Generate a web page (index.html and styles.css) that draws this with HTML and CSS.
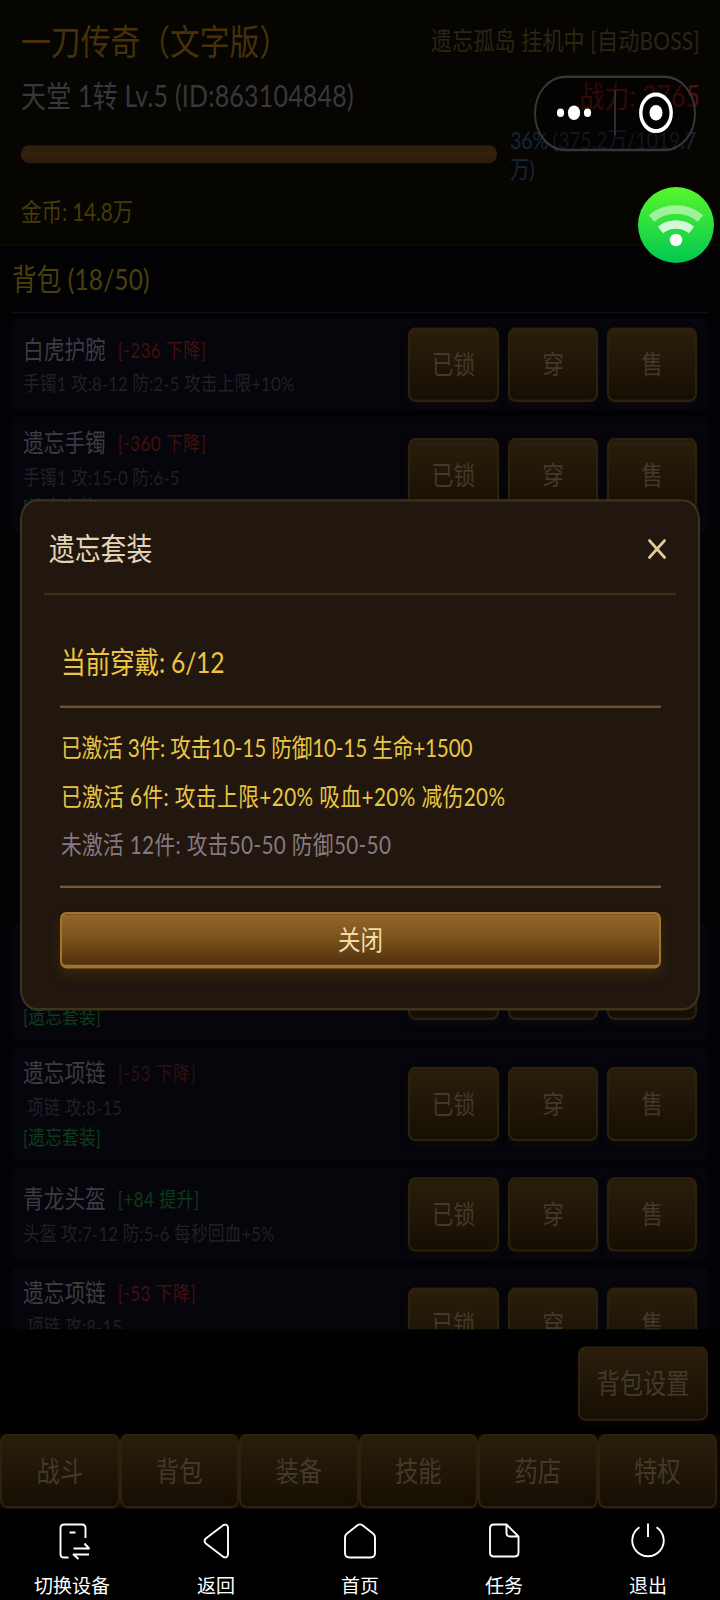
FILE: index.html
```html
<!DOCTYPE html>
<html lang="zh-CN">
<head>
<meta charset="utf-8">
<title>一刀传奇（文字版）</title>
<link rel="stylesheet" href="styles.css">
</head>
<body>
<div class="screen">
<div class="viewport">
<main class="stage">
  <header class="header">
    <div class="row row-title"><h1 class="title">一刀传奇（文字版）</h1><span class="status">遗忘孤岛 挂机中 [自动BOSS]</span></div>
    <div class="row row-level"><span class="level">天堂 1转 Lv.5 (ID:863104848)</span><span class="power">战力: 3765</span></div>
    <div class="row row-exp"><div class="exp-bar"></div><div class="exp-text">36% (375.2万/1019.7<br>万)</div></div>
    <div class="gold">金币: 14.8万</div>
  </header>
  <section class="bag">
    <h2 class="bag-title">背包 (18/50)</h2>
    <div class="list">
      <article class="card short">
        <div class="info"><div class="name">白虎护腕<span class="tag down">[-236 下降]</span></div><div class="attr">手镯1 攻:8-12 防:2-5 攻击上限+10%</div></div>
        <div class="actions"><button class="btn">已锁</button><button class="btn">穿</button><button class="btn">售</button></div>
      </article>
      <article class="card">
        <div class="info"><div class="name">遗忘手镯<span class="tag down">[-360 下降]</span></div><div class="attr">手镯1 攻:15-0 防:6-5</div><div class="set">[遗忘套装]</div></div>
        <div class="actions"><button class="btn">已锁</button><button class="btn">穿</button><button class="btn">售</button></div>
      </article>
      <div class="covered"></div>
      <article class="card">
        <div class="info"><div class="name">遗忘项链</div><div class="attr inset">项链 攻:8-15</div><div class="set">[遗忘套装]</div></div>
        <div class="actions"><button class="btn">已锁</button><button class="btn">穿</button><button class="btn">售</button></div>
      </article>
      <article class="card">
        <div class="info"><div class="name">遗忘项链<span class="tag down faint">[-53 下降]</span></div><div class="attr inset">项链 攻:8-15</div><div class="set">[遗忘套装]</div></div>
        <div class="actions"><button class="btn">已锁</button><button class="btn">穿</button><button class="btn">售</button></div>
      </article>
      <article class="card short">
        <div class="info"><div class="name">青龙头盔<span class="tag up">[+84 提升]</span></div><div class="attr">头盔 攻:7-12 防:5-6 每秒回血+5%</div></div>
        <div class="actions"><button class="btn">已锁</button><button class="btn">穿</button><button class="btn">售</button></div>
      </article>
      <article class="card">
        <div class="info"><div class="name">遗忘项链<span class="tag down">[-53 下降]</span></div><div class="attr inset">项链 攻:8-15</div><div class="set">[遗忘套装]</div></div>
        <div class="actions"><button class="btn">已锁</button><button class="btn">穿</button><button class="btn">售</button></div>
      </article>
    </div>
  </section>
  <div class="toolbar"><button class="btn settings">背包设置</button></div>
  <nav class="tabs"><button class="btn">战斗</button><button class="btn">背包</button><button class="btn">装备</button><button class="btn">技能</button><button class="btn">药店</button><button class="btn">特权</button></nav>

  <section class="modal">
    <div class="modal-head"><h3 class="modal-title">遗忘套装</h3>
      <svg class="close" viewBox="0 0 18 17"><path d="M1.5 1.5 16.5 15.5M16.5 1.5 1.5 15.5"/></svg></div>
    <div class="modal-body">
      <div class="worn">当前穿戴: 6/12</div>
      <div class="effects">
        <div class="effect e1">已激活 3件: 攻击10-15 防御10-15 生命+1500</div>
        <div class="effect e2">已激活 6件: 攻击上限+20% 吸血+20% 减伤20%</div>
        <div class="effect off">未激活 12件: 攻击50-50 防御50-50</div>
      </div>
      <button class="confirm">关闭</button>
    </div>
  </section>

  <div class="capsule">
    <svg viewBox="0 0 162 62.5">
      <circle cx="26.5" cy="31" r="3.6"/><circle cx="40" cy="31" r="6.1"/><circle cx="53.5" cy="31" r="3.6"/>
      <path d="M81 12V50" class="sep"/>
      <circle cx="122" cy="31" r="15.2" class="ring"/><circle cx="122" cy="31" r="6.5"/>
    </svg>
  </div>
</main>
</div>

<div class="wifi">
  <svg viewBox="0 0 76 76">
    <path d="M13.5 31.5A38 38 0 0 1 62.500 31.500" class="far"/>
    <path d="M22.5 43A25 25 0 0 1 53.500 43" class="near"/>
    <circle cx="38" cy="53" r="6.2"/>
  </svg>
</div>

<footer class="sysbar">
  <div class="sys"><svg viewBox="-5.500 0 36 36"><path d="M26 15V5q0-3.500-3.500-3.500H4.500Q1 1.500 1 5V31q0 3.500 3.500 3.500H9M10 9.500h6M14 25.500H29.500L25 20.500M29.500 31.500H14L19 36"/></svg><span>切换设备</span></div>
  <div class="sys"><svg viewBox="-5.500 0 36 36"><path d="M20 2 2.300 15.500Q-.2 18 2.300 20.500L20 34q4.300 1.500 4.500-3V5q-.2-4.500-4.500-3Z"/></svg><span>返回</span></div>
  <div class="sys"><svg viewBox="0 0 36 36"><path d="M15.500 2.200 5 10.500Q3 12 3 14.500V30q0 4.500 4.500 4.500H28.500Q33 34.500 33 30V14.500Q33 12 31 10.500L20.500 2.200Q18 .5 15.500 2.200Z"/></svg><span>首页</span></div>
  <div class="sys"><svg viewBox="0 0 36 36"><path d="M20.500 1.500H8Q4 1.500 4 5.500V29.500Q4 33.500 8 33.500H28.500Q32.500 33.500 32.500 29.500V13.500ZM20.500 1.500V10q0 3.500 3.500 3.500h8.500"/></svg><span>任务</span></div>
  <div class="sys"><svg viewBox="0 0 36 36"><path d="M9.500 4.300A15.700 15.700 0 1 0 26.500 4.300M18 .5V14"/></svg><span>退出</span></div>
</footer>
</div>
</body>
</html>
```
FILE: styles.css
```css
* { box-sizing: border-box; }
body { margin: 0; background: #000; }
h1, h2, h3 { margin: 0; font-weight: 400; }
button { font: inherit; padding: 0; margin: 0; }

.screen {
  position: relative;
  width: 720px;
  height: 1600px;
  overflow: hidden;
  background: #000;
  font-family: Lato, "Noto Sans CJK SC", sans-serif;
}
.viewport { height: 1509px; overflow: hidden; }

/* The game canvas fills the tall window by stretching vertically. */
.stage {
  position: relative;
  display: flex;
  flex-direction: column;
  width: 720px;
  height: 1257.5px;
  transform: scaleY(1.2);
  transform-origin: 0 0;
  background: #020204;
  white-space: nowrap;
}

.header {
  height: 205px;
  padding: 14.500px 20px 0 21px;
  background: #070502;
  border-bottom: 1px solid #140e07;
}
.row { display: flex; justify-content: space-between; }
.row-title { height: 39.500px; line-height: 40px; }
.title { font-size: 29.800px; color: #483109; }
.status { font-size: 21px; line-height: 38px; color: #2b2611; letter-spacing: .2px; }
.row-level { height: 50.500px; line-height: 50px; font-size: 25px; }
.level { color: #35383c; letter-spacing: .2px; }
.power { color: #521208; }
.row-exp { height: 56px; justify-content: flex-start; gap: 13px; }
.exp-bar {
  width: 476px;
  height: 15px;
  margin-top: 16.500px;
  border-radius: 8px;
  background: linear-gradient(#2c1d0d, #342108 55%, #2b1b10);
}
.exp-text { font-size: 19.700px; line-height: 24px; color: #17253a; letter-spacing: -.2px; }
.gold { font-size: 20.700px; line-height: 30px; color: #453b09; letter-spacing: -.15px; }

.bag { height: 903.300px; padding: 0 12px; overflow: hidden; }
.bag-title {
  height: 56px;
  margin-bottom: 4px;
  line-height: 55px;
  font-size: 24.500px;
  letter-spacing: .15px;
  color: #4b400d;
  border-bottom: 1px solid #121215;
}
.list { display: flex; flex-direction: column; gap: 4.600px; }
.card {
  display: flex;
  flex: none;
  align-items: center;
  justify-content: space-between;
  height: 96.700px;
  padding: 0 11px;
  border-radius: 6px;
  background: #05050b;
}
.card.short { height: 77.500px; }
.short .info { padding-top: 3px; }
.covered { flex: none; height: 317.500px; }
.name { height: 29px; line-height: 28px; font-size: 20.700px; color: #3c3c42; }
.tag { margin-left: 12px; font-size: 17px; letter-spacing: .45px; position: relative; top: -1px; }
.down { color: #40110f; }
.faint { color: #2e1013; }
.up { color: #0d3b18; }
.attr { height: 28.500px; line-height: 28.500px; font-size: 16.700px; color: #202026; letter-spacing: .15px; }
.inset { padding-left: 4px; }
.set { height: 23.500px; line-height: 22.500px; font-size: 16.700px; letter-spacing: .2px; color: #0f3c1c; }
.actions { display: grid; grid-template-columns: 91px 90px 90px; gap: 9px; }
.btn {
  height: 61.500px;
  padding-bottom: 2.500px;
  border: 2px solid #2b210e;
  border-radius: 7px;
  background: linear-gradient(#2a1e0b, #1e1507 60%, #170e03);
  box-shadow: 0 3px 8px rgba(60, 42, 8, .15);
  color: #43392a;
  font-size: 21.700px;
}

.toolbar {
  display: flex;
  justify-content: flex-end;
  height: 86.700px;
  padding: 14.200px 12px 0;
  background: #010102;
}
.settings { width: 130px; font-size: 23.200px; }
.tabs { display: grid; grid-template-columns: repeat(6, 1fr); padding-right: 3px; background: #0c0703; }
.tabs .btn { height: 62.500px; font-size: 23.300px; }

.modal {
  position: absolute;
  left: 20px;
  top: 416.300px;
  width: 680px;
  height: 425.800px;
  padding: 0 22px;
  border: 2px solid #3d321a;
  border-radius: 17px;
  background: #21170e;
}
.modal-head {
  display: flex;
  align-items: center;
  justify-content: space-between;
  height: 78px;
  padding: 0 10px 0 5px;
  border-bottom: 2px solid #3d2f1a;
}
.modal-title { padding-bottom: 2px; font-size: 25.800px; color: #e5d4b6; }
.close { width: 18px; height: 17px; margin-top: 2px; fill: none; stroke: #e0cc98; stroke-width: 2.600; stroke-linecap: round; }
.modal-body { padding: 30px 15px 0 16px; }
.worn { height: 64px; line-height: 51px; padding-left: 1px; font-size: 24.700px; letter-spacing: -.2px; color: #edc443; border-bottom: 2px solid #70522c; }
.effects { height: 149.500px; padding: 13px 0 0 1px; border-bottom: 2px solid #7a5a2c; }
.effect { height: 40.300px; line-height: 40.300px; font-size: 20.700px; color: #e9c643; }
.effect.e1 { letter-spacing: -.17px; }
.effect.e2 { letter-spacing: .42px; }
.effect.off { color: #867a82; letter-spacing: .35px; }
.confirm {
  width: 100%;
  height: 47.500px;
  margin-top: 20px;
  padding-bottom: 2.500px;
  border: 2px solid #a2742d;
  border-bottom-width: 3px;
  border-radius: 6px;
  background: linear-gradient(#93662a, #7b541c 45%, #512f0e);
  box-shadow: 0 5px 10px rgba(112, 78, 10, .28);
  color: #f1dcab;
  font-size: 22.500px;
}

.capsule {
  position: absolute;
  left: 534px;
  top: 63px;
  width: 162px;
  height: 62.500px;
  border: 2px solid #363636;
  border-radius: 32px;
  background: rgba(0, 0, 0, .4);
}
.capsule svg { display: block; width: 162px; height: 62.500px; margin: -2px; fill: #fff; }
.capsule .sep { stroke: #323232; stroke-width: 1.800; }
.capsule .ring { fill: #000; stroke: #fff; stroke-width: 3.400; }

.wifi {
  position: absolute;
  left: 638px;
  top: 187px;
  width: 76px;
  height: 76px;
  border-radius: 50%;
  background: linear-gradient(#58f52c, #00c951);
}
.wifi svg { display: block; fill: #fff; }
.wifi path { fill: none; stroke: #fff; stroke-width: 8.500; }
.wifi .far { stroke-opacity: .5; }
.wifi .near { stroke-opacity: .8; }

.sysbar { display: grid; grid-template-columns: repeat(5, 144px); height: 91px; color: #fff; }
.sys { display: flex; flex-direction: column; align-items: center; padding-top: 14px; }
.sys svg { width: 36px; height: 36px; fill: none; stroke: #fff; stroke-width: 1.900; overflow: visible; stroke-linejoin: round; }
.sys span { margin-top: 13px; font-size: 19px; line-height: 28px; }
```
